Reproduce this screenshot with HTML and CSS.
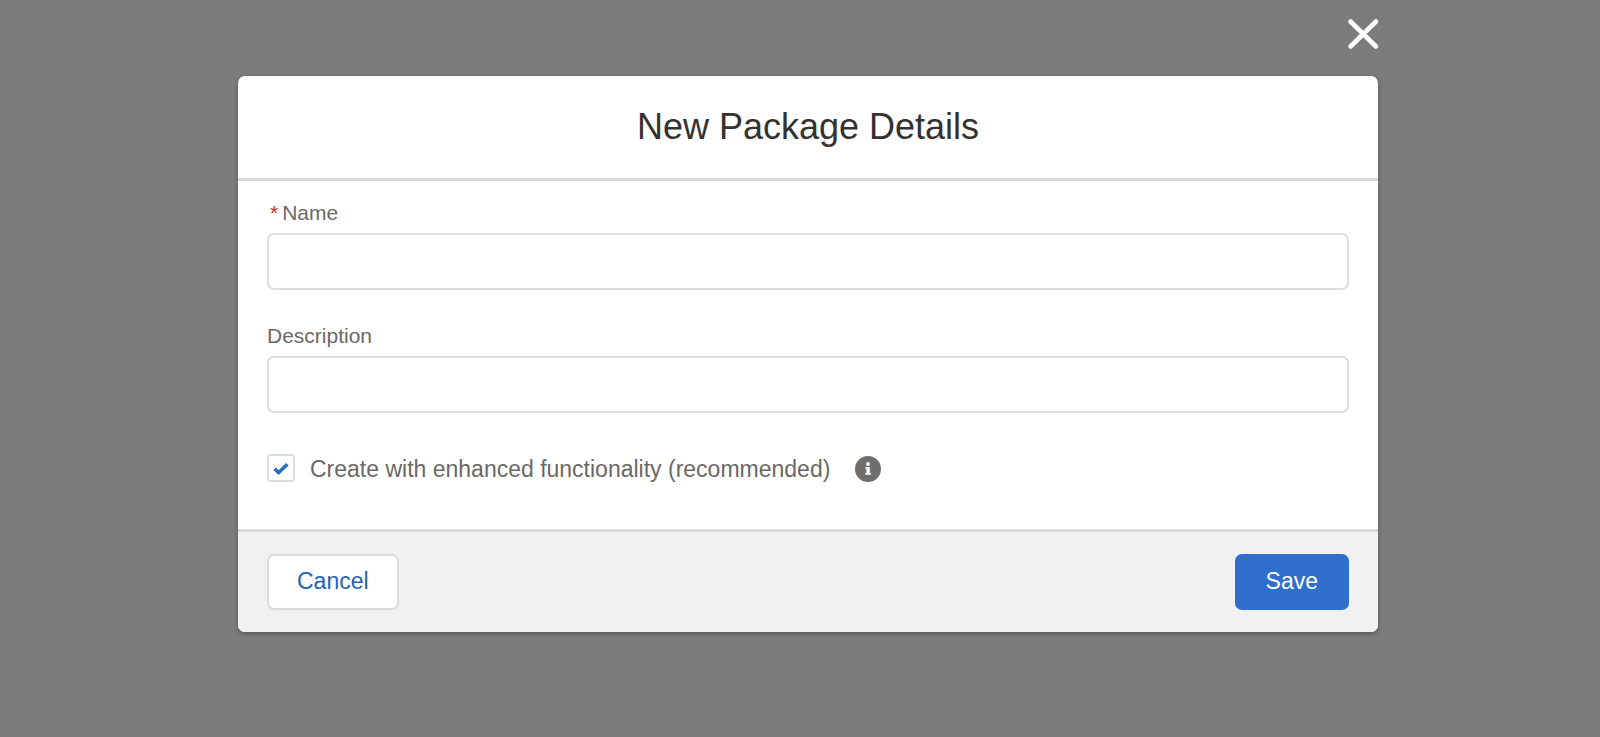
FILE: index.html
```
<!DOCTYPE html>
<html lang="en">
<head>
    <meta charset="UTF-8">
    <meta name="viewport" content="width=device-width, initial-scale=1.0">
    <title>New Package Details</title>
    <link rel="stylesheet" href="styles.css">
</head>
<body>
<div class="backdrop">
    <button class="close" type="button" aria-label="Close">
        <svg viewBox="0 0 32 32" width="32" height="32" aria-hidden="true">
            <path d="M4.5 3.5 L30 28.5 M30 3.5 L4.5 28.5" fill="none" stroke="#fff" stroke-width="4.6" stroke-linecap="round"/>
        </svg>
    </button>

    <form class="modal" role="dialog" aria-labelledby="modalTitle">
        <header class="modal-header">
            <h1 id="modalTitle">New Package Details</h1>
        </header>

        <div class="modal-body">
            <div class="field">
                <label class="required" for="name"><span class="asterisk">*</span>Name</label>
                <input type="text" id="name">
            </div>
            <div class="field">
                <label for="description">Description</label>
                <input type="text" id="description">
            </div>
            <div class="option">
                <input type="checkbox" id="enhanced" checked>
                <label for="enhanced">Create with enhanced functionality (recommended)</label>
                <svg class="info" viewBox="0 0 26 26" width="26" height="26" aria-hidden="true">
                    <circle cx="13" cy="13" r="13" fill="#706e6b"/>
                    <circle cx="13" cy="8" r="1.9" fill="#fff"/>
                    <path d="M10.4 11 H14.8 V17 H16 V18.8 H10.2 V17 H11.4 V12.8 H10.4 Z" fill="#fff"/>
                </svg>
            </div>
        </div>

        <footer class="modal-footer">
            <button class="btn" type="button">Cancel</button>
            <button class="btn btn-primary" type="submit">Save</button>
        </footer>
    </form>
</div>
</body>
</html>
```

FILE: styles.css
```
* {
    box-sizing: border-box;
}
body {
    margin: 0;
    font-family: "Liberation Sans", Arial, sans-serif;
    color: #6b6966;
    background-color: #7e7b7c;
}
.backdrop {
    display: flex;
    flex-direction: column;
    gap: 26px;
    min-height: 100vh;
    padding: 18px 222px 24px 238px;
}
.close {
    display: flex;
    align-self: flex-end;
    padding: 0;
    border: none;
    background: none;
    cursor: pointer;
}
.close svg {
    overflow: visible;
}
.modal {
    border-radius: 7px;
    background-color: #fff;
    box-shadow: 0 2px 5px rgba(0, 0, 0, 0.3);
    overflow: hidden;
}
.modal-header {
    padding: 30px 29px;
    border-bottom: 3px solid #d9d9d9;
    text-align: center;
}
.modal-header h1 {
    margin: 0;
    font-size: 36px;
    font-weight: normal;
    line-height: 42px;
    color: #333231;
}
.modal-body {
    padding: 20px 29px 47px;
}
.field {
    display: flex;
    flex-direction: column;
    gap: 8px;
    margin-bottom: 34px;
}
.field label {
    font-size: 21px;
    line-height: 24px;
}
.required {
    display: flex;
    gap: 4px;
    padding-left: 3px;
}
.asterisk {
    color: #b8322b;
}
.field input {
    width: 100%;
    height: 57px;
    padding: 0 20px;
    border: 2px solid #dfdddc;
    border-radius: 7px;
    font: inherit;
    font-size: 23px;
    background-color: #fff;
}
.option {
    display: flex;
    align-items: flex-end;
    padding-top: 7px;
}
.option input {
    appearance: none;
    width: 28px;
    height: 28px;
    margin: 0 15px 0 0;
    border: 2px solid #dfdddc;
    border-radius: 4px;
    background-color: #fff;
}
.option input:checked {
    background-image: url("data:image/svg+xml,%3Csvg xmlns='http://www.w3.org/2000/svg' viewBox='0 0 24 24'%3E%3Cpath d='M5.6 12.8 L9.6 16.6 L18.4 8.2' fill='none' stroke='%232a6bc4' stroke-width='3.6'/%3E%3C/svg%3E");
}
.option label {
    font-size: 23px;
    line-height: 26px;
}
.info {
    margin-left: 25px;
}
.modal-footer {
    display: flex;
    justify-content: space-between;
    padding: 22px 29px;
    border-top: 3px solid #d9d9d9;
    background-color: #f1f1f1;
}
.btn {
    height: 56px;
    padding: 0 28px 2px;
    border: 2px solid #dddbda;
    border-radius: 7px;
    font: inherit;
    font-size: 23px;
    color: #2565b5;
    background-color: #fff;
    cursor: pointer;
}
.btn-primary {
    padding: 0 29px 2px;
    border-color: #2d6fcb;
    color: #fff;
    background-color: #2d6fcb;
}
```
